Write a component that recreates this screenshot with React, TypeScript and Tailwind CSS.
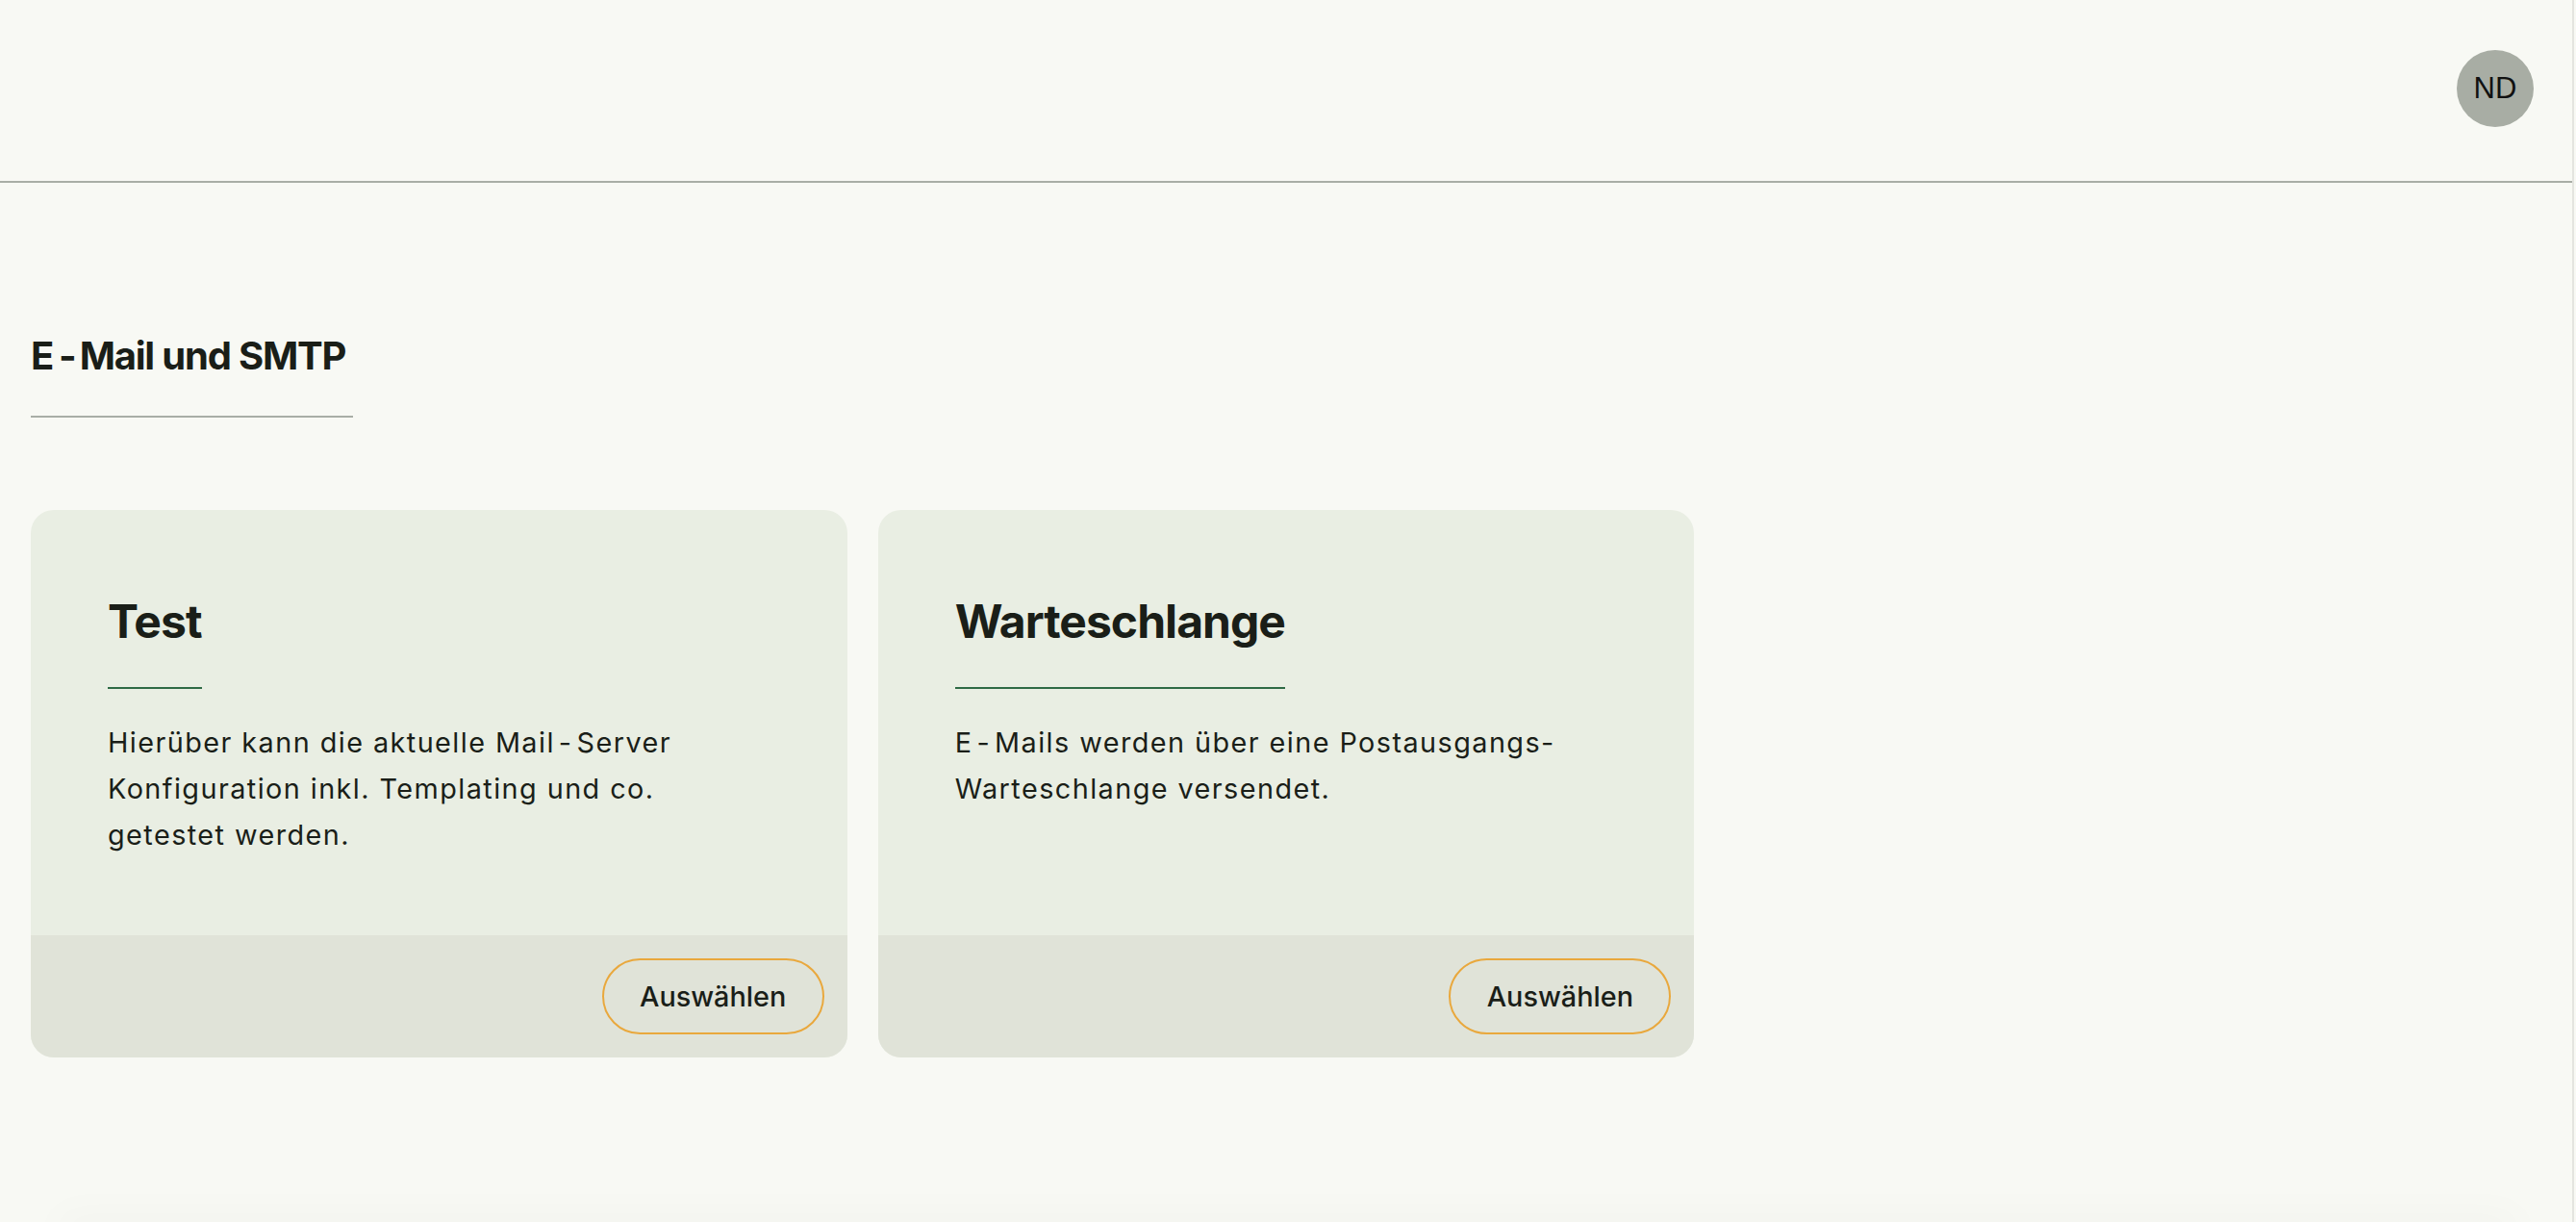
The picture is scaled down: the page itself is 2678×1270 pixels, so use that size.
import React from "react";

function Hy({ big = false }: { big?: boolean }) {
  return <span className={big ? "ml-[6px] mr-[4px]" : "ml-[4px] mr-[4px]"}>-</span>;
}

function Card({
  title,
  children,
}: {
  title: string;
  children: React.ReactNode;
}) {
  return (
    <div className="flex flex-col rounded-[24px] overflow-hidden bg-[#e9eee3] h-[569px]">
      <div className="flex-1 px-[80px] pt-[80px]">
        <h3 className="inline-block text-[48px] leading-[72px] font-bold tracking-[-0.02em] text-[#1a1e18] pb-8 border-b-2 border-[#2f6a45]">
          {title}
        </h3>
        <p className="mt-8 max-w-[670px] text-[28.8px] leading-[48px] tracking-[0.05em] text-[#1a1e18]">
          {children}
        </p>
      </div>
      <div className="h-[127px] bg-[#e0e3d8] flex items-center justify-end pr-[24px]">
        <button className="w-[231px] h-[79px] rounded-full border-2 border-[#e9a83d] text-[28.8px] font-medium text-[#1a1e18] flex items-center justify-center">
          Auswählen
        </button>
      </div>
    </div>
  );
}

export default function App() {
  return (
    <div className="min-h-screen bg-[#f8f9f4] font-['Inter',sans-serif] text-[#1a1e18] relative">
      <div className="mr-[2px] border-r-2 border-[#e4e5e0] min-h-screen">
        <header className="h-[190px] border-b-2 border-[#a9aea6] flex justify-end items-start pt-[52px] pr-[40px]">
          <div className="w-[80px] h-[80px] rounded-full bg-[#a8ada4] flex items-center justify-center font-['Liberation_Sans',Arial,sans-serif] text-[31px] text-[#111]">
            ND
          </div>
        </header>
        <main className="px-8 pt-[150px]">
          <h2 className="inline-block text-[40px] leading-[60px] font-bold tracking-[-0.03em] text-[#1a1e18] pb-8 pr-2 border-b-2 border-[#a9aea6]">
            E<Hy big />Mail und SMTP
          </h2>
          <div className="mt-[96px] grid grid-cols-3 gap-8">
            <Card title="Test">
              Hierüber kann die aktuelle Mail<Hy />Server Konfiguration inkl. Templating und co. getestet werden.
            </Card>
            <Card title="Warteschlange">
              E<Hy />Mails werden über eine Postausgangs-Warteschlange versendet.
            </Card>
          </div>
        </main>
      </div>
      <div className="fixed left-[60px] right-[60px] top-full h-[40px] shadow-[0_-10px_40px_rgba(0,0,0,0.025)]" />
    </div>
  );
}
